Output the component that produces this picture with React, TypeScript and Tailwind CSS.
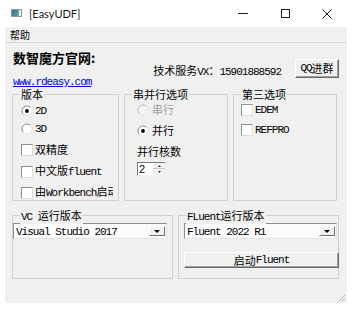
import React from "react";

const T = ({ s }: { s: string }) => (
  <>
    {s
      .split(/([\x20-\x7E]+)/)
      .filter(Boolean)
      .map((p, i) =>
        /[\x20-\x7E]/.test(p[0]) ? (
          <span key={i} className="font-['Liberation_Mono',monospace] tracking-[-1px] whitespace-pre">
            {p}
          </span>
        ) : (
          <span key={i}>{p}</span>
        )
      )}
  </>
);

const Radio = ({ checked, disabled }: { checked?: boolean; disabled?: boolean }) => (
  <svg width="12" height="12" viewBox="0 0 12 12" className="shrink-0">
    <circle cx="6" cy="6" r="5" fill={disabled ? "#f4f4f4" : "#ffffff"} />
    <path d="M2.46 9.54 A5 5 0 0 1 9.54 2.46" fill="none" stroke={disabled ? "#b8b8b8" : "#8a8a8a"} />
    <path d="M9.54 2.46 A5 5 0 0 1 2.46 9.54" fill="none" stroke="#e6e6e6" />
    {checked && <circle cx="6" cy="6" r="1.9" fill="#000" />}
  </svg>
);

const Check = () => (
  <div className="w-[12px] h-[12px] shrink-0 bg-white border-t border-l border-[#8e8e8e] border-r-[#dcdcdc] border-b-[#dcdcdc] border-r border-b" />
);

const Group = ({
  label,
  className,
  children,
}: {
  label: string;
  className: string;
  children?: React.ReactNode;
}) => (
  <div className={"relative border border-[#cfcfcf] shrink-0 " + className}>
    <div className="absolute left-[7px] top-[-7px] px-[1px] bg-[#f0f0f0] leading-[13px] whitespace-nowrap">
      <T s={label} />
    </div>
    {children}
  </div>
);

const Combo = ({ text, className }: { text: string; className: string }) => (
  <div
    className={
      "flex items-center h-[16px] bg-[#fbfbfb] border-t border-l border-[#8e8e8e] border-b border-r border-b-[#e4e4e4] border-r-[#e4e4e4] " +
      className
    }
  >
    <div className="pl-[2px] leading-[13px] whitespace-nowrap">
      <T s={text} />
    </div>
    <div className="ml-auto mr-[1px] w-[16px] h-[10px] bg-[#f0f0f0] border-t border-l border-white border-b border-r border-b-[#6e6e6e] border-r-[#6e6e6e] flex items-center justify-center">
      <svg width="6" height="3" viewBox="0 0 6 3">
        <path d="M0 0 H6 L3 3 Z" fill="#000" />
      </svg>
    </div>
  </div>
);

const Btn = ({ text, className }: { text: string; className: string }) => (
  <div
    className={
      "flex items-center justify-center bg-[#f0f0f0] border-t border-l border-white border-b border-r border-b-[#696969] border-r-[#696969] shadow-[inset_-1px_-1px_0_#a0a0a0] leading-[13px] whitespace-nowrap " +
      className
    }
  >
    <T s={text} />
  </div>
);

export default function App() {
  return (
    <div className="w-[354px] h-[311px] bg-white flex flex-col overflow-hidden text-black text-[11px] leading-[13px] font-['Noto_Sans_CJK_SC',sans-serif]">
      {/* Title bar */}
      <div className="h-[27px] flex items-center shrink-0">
        <svg width="11" height="8" viewBox="0 0 11 8" className="ml-[11px] -mt-[1px]">
          <defs>
            <linearGradient id="ic" x1="0" y1="0" x2="1" y2="1">
              <stop offset="0" stopColor="#2f6fa8" />
              <stop offset="1" stopColor="#4fae8a" />
            </linearGradient>
          </defs>
          <rect x="0" y="0" width="11" height="8" fill="#8a9aa6" />
          <rect x="1" y="1" width="6" height="6" fill="url(#ic)" />
          <rect x="8" y="1" width="2" height="6" fill="#f2f2f2" />
        </svg>
        <div className="ml-[7px] text-[11px] font-['Lato',sans-serif] text-[#1a1a1a]">[EasyUDF]</div>
        <div className="ml-auto mr-[6px] flex h-[27px]">
          <div className="w-[42px] flex items-center justify-center">
            <div className="w-[10px] h-[1px] bg-[#1a1a1a]" />
          </div>
          <div className="w-[42px] flex items-center justify-center">
            <div className="w-[9px] h-[9px] border border-[#1a1a1a]" />
          </div>
          <div className="w-[42px] flex items-center justify-center">
            <svg width="10" height="10" viewBox="0 0 10 10">
              <path d="M0.5 0.5 L9.5 9.5 M9.5 0.5 L0.5 9.5" stroke="#1a1a1a" strokeWidth="1" />
            </svg>
          </div>
        </div>
      </div>

      {/* Body */}
      <div className="flex h-[276px] shrink-0">
        <div className="w-[5px] shrink-0" />
        <div className="w-[342px] shrink-0 bg-[#f0f0f0] flex flex-col relative">
          {/* Menu */}
          <div className="h-[16px] shrink-0 flex items-center border-b border-[#dadada] pl-[5px] text-[10px]">
            帮助
          </div>

          {/* Header */}
          <div className="h-[44px] shrink-0 flex">
            <div className="pl-[8px] flex flex-col">
              <div className="mt-[7px] h-[16px] leading-[16px] text-[13px] font-bold">数智魔方官网:</div>
              <div className="mt-[8px] h-[12px] leading-[12px] text-[#0000ee] underline">
                <span className="font-['Liberation_Mono',monospace] tracking-[-1px]">www.rdeasy.com</span>
              </div>
            </div>
            <div className="ml-auto mr-[8px] mt-[16px] flex items-start">
              <div className="mt-[5px] whitespace-nowrap">
                <T s="技术服务VX：15901888592" />
              </div>
              <Btn text="QQ进群" className="ml-[14px] w-[44px] h-[19px]" />
            </div>
          </div>

          {/* Top groups */}
          <div className="mt-[7px] pl-[7px] flex gap-[5px]">
            <Group label="版本" className="w-[107px] h-[107px]">
              <div className="flex flex-col pl-[8px] pt-[9px]">
                <div className="flex items-center h-[13px]">
                  <Radio checked />
                  <div className="ml-[2px]"><T s="2D" /></div>
                </div>
                <div className="flex items-center h-[13px] mt-[5px]">
                  <Radio />
                  <div className="ml-[2px]"><T s="3D" /></div>
                </div>
                <div className="flex items-center h-[13px] mt-[8px]">
                  <Check />
                  <div className="ml-[2px]"><T s="双精度" /></div>
                </div>
                <div className="flex items-center h-[13px] mt-[9px]">
                  <Check />
                  <div className="ml-[2px] whitespace-nowrap"><T s="中文版fluent" /></div>
                </div>
                <div className="flex items-center h-[13px] mt-[8px] w-[92px] overflow-hidden">
                  <Check />
                  <div className="ml-[2px] whitespace-nowrap"><T s="由Workbench启动" /></div>
                </div>
              </div>
            </Group>
            <Group label="串并行选项" className="w-[104px] h-[107px]">
              <div className="flex flex-col pl-[12px] pt-[8px]">
                <div className="flex items-center h-[13px] text-[#a0a0a0]">
                  <Radio disabled />
                  <div className="ml-[3px]">串行</div>
                </div>
                <div className="flex items-center h-[13px] mt-[8px]">
                  <Radio checked />
                  <div className="ml-[3px]">并行</div>
                </div>
                <div className="h-[13px] mt-[8px]">并行核数</div>
                <div className="mt-[4px] flex h-[13px] w-[28px]">
                  <div className="w-[16px] h-[13px] bg-white border-t border-l border-[#7a7a7a] flex items-center pl-[1px]">
                    <span className="font-['Liberation_Sans',sans-serif] text-[11px]">2</span>
                  </div>
                  <div className="w-[12px] h-[13px] flex flex-col bg-white border-t border-[#7a7a7a]">
                    <div className="h-[6px] flex items-center justify-center bg-[#f0f0f0] border-b border-[#c8c8c8]">
                      <svg width="3" height="2" viewBox="0 0 3 2"><path d="M0 2 L1.5 0 L3 2 Z" fill="#333" /></svg>
                    </div>
                    <div className="h-[6px] flex items-center justify-center bg-[#f0f0f0]">
                      <svg width="3" height="2" viewBox="0 0 3 2"><path d="M0 0 L3 0 L1.5 2 Z" fill="#333" /></svg>
                    </div>
                  </div>
                </div>
              </div>
            </Group>
            <Group label="第三选项" className="w-[104px] h-[107px]">
              <div className="flex flex-col pl-[7px] pt-[8px]">
                <div className="flex items-center h-[13px]">
                  <Check />
                  <div className="ml-[2px]"><T s="EDEM" /></div>
                </div>
                <div className="flex items-center h-[13px] mt-[7px]">
                  <Check />
                  <div className="ml-[2px]"><T s="REFPRO" /></div>
                </div>
              </div>
            </Group>
          </div>

          {/* Bottom groups */}
          <div className="mt-[14px] pl-[7px] flex gap-[5px]">
            <Group label="VC 运行版本" className="w-[161px] h-[64px]">
              <Combo text="Visual Studio 2017" className="mt-[7px] w-[154px]" />
            </Group>
            <Group label="FLuent运行版本" className="w-[161px] h-[64px]">
              <div className="pl-[5px] flex flex-col">
                <Combo text="Fluent 2022 R1" className="mt-[7px] w-[153px]" />
                <Btn text="启动Fluent" className="mt-[13px] w-[155px] h-[16px]" />
              </div>
            </Group>
          </div>

          {/* resize grip */}
          <svg width="8" height="8" viewBox="0 0 8 8" className="absolute right-[1px] bottom-[1px]">
            <path d="M7 1 L1 7 M7 4 L4 7 M7 6.5 L6.5 7" stroke="#b0b0b0" strokeWidth="1" />
          </svg>
        </div>
      </div>
    </div>
  );
}
